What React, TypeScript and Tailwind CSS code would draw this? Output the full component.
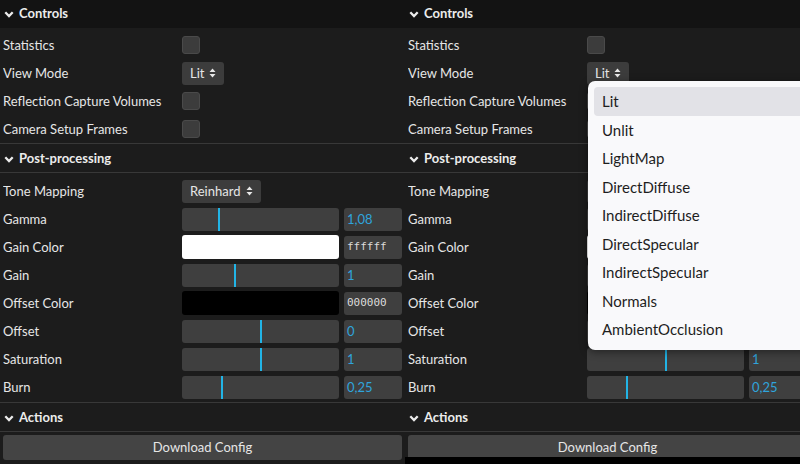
import { ReactNode } from "react";

const VIEW_MODES = [
  "Lit",
  "Unlit",
  "LightMap",
  "DirectDiffuse",
  "IndirectDiffuse",
  "DirectSpecular",
  "IndirectSpecular",
  "Normals",
  "AmbientOcclusion",
];

function Chevron() {
  return (
    <svg width="10" height="7" viewBox="0 0 10 7" className="shrink-0">
      <path d="M1.3 1.3l3.7 3.7 3.7-3.7" fill="none" stroke="#ececec" strokeWidth="2.3" />
    </svg>
  );
}

function SortArrows() {
  return (
    <svg width="7" height="10" viewBox="0 0 7 10" className="shrink-0">
      <path d="M3.5 0.5L6.5 4H0.5z M3.5 9.5L6.5 6H0.5z" fill="#e8e8e8" />
    </svg>
  );
}

function Header({ title, top }: { title: string; top?: boolean }) {
  return (
    <div
      className={`flex items-center gap-[5px] px-[4px] text-[13px] font-bold text-[#ececec] ${
        top ? "h-[28px] bg-[#131313]" : "h-[30px] border-y border-[#383838] bg-[#1c1c1c] pt-[2px]"
      }`}
    >
      <Chevron />
      <span>{title}</span>
    </div>
  );
}

function Row({ label, children }: { label: string; children: ReactNode }) {
  return (
    <div className="flex h-[28px] items-center">
      <div className="w-[179px] shrink-0 truncate pt-[1px]">{label}</div>
      <div className="flex items-center gap-[5px]">{children}</div>
    </div>
  );
}

function Checkbox() {
  return <div className="h-[18px] w-[18px] rounded-[3px] border border-[#4a4a4a] bg-[#3c3c3c]" />;
}

function Select({ value, w }: { value: string; w: string }) {
  return (
    <div className={`flex h-[23px] items-center justify-between rounded-[3px] bg-[#3c3c3c] px-[8px] ${w}`}>
      <span className="pt-[1px]">{value}</span>
      <SortArrows />
    </div>
  );
}

function Slider({ pos, value }: { pos: number; value: string }) {
  return (
    <>
      <div className="relative h-[23px] w-[157px] rounded-[3px] bg-[#3f3f3f]">
        <div className="absolute top-0 bottom-0 w-[2px] bg-[#22b4e6]" style={{ left: pos }} />
      </div>
      <div className="flex h-[23px] w-[58px] items-center rounded-[3px] bg-[#3f3f3f] pl-[3px] pt-[1px] text-[#2fa4dc]">
        {value}
      </div>
    </>
  );
}

function ColorRow({ color, hex }: { color: string; hex: string }) {
  return (
    <>
      <div className={`h-[24px] w-[157px] rounded-[3px] ${color}`} />
      <div className="flex h-[23px] w-[58px] items-center rounded-[3px] bg-[#3f3f3f] pl-[3px] font-['DejaVu_Sans_Mono',monospace] text-[11px] text-[#dcdcdc]">
        {hex}
      </div>
    </>
  );
}

function ViewModeMenu() {
  return (
    <div className="absolute left-[183px] top-[81px] w-[230px] rounded-[7px] bg-[#f9f9fb] p-[6px] shadow-[0_2px_8px_rgba(0,0,0,0.45)]">
      {VIEW_MODES.map((m, i) => (
        <div
          key={m}
          className={`flex h-[28.5px] items-center rounded-[4px] pl-[8px] text-[15px] text-[#1e1e1e] ${
            i === 0 ? "bg-[#e2e2e7]" : ""
          }`}
        >
          {m}
        </div>
      ))}
    </div>
  );
}

function Panel({ menuOpen }: { menuOpen?: boolean }) {
  return (
    <div className="relative h-[464px] w-[405px] bg-[#1c1c1c] text-[13px] text-[#e6e6e6]">
      <Header title="Controls" top />
      <div className="px-[3px] pt-[3px]">
        <Row label="Statistics">
          <Checkbox />
        </Row>
        <Row label="View Mode">
          <Select value="Lit" w="w-[42px]" />
        </Row>
        <Row label="Reflection Capture Volumes">
          <Checkbox />
        </Row>
        <Row label="Camera Setup Frames">
          <Checkbox />
        </Row>
      </div>
      <Header title="Post-processing" />
      <div className="px-[3px] pt-[4px] pb-[1px]">
        <Row label="Tone Mapping">
          <Select value="Reinhard" w="w-[79px]" />
        </Row>
        <Row label="Gamma">
          <Slider pos={36} value="1,08" />
        </Row>
        <Row label="Gain Color">
          <ColorRow color="bg-white" hex="ffffff" />
        </Row>
        <Row label="Gain">
          <Slider pos={52} value="1" />
        </Row>
        <Row label="Offset Color">
          <ColorRow color="bg-black" hex="000000" />
        </Row>
        <Row label="Offset">
          <Slider pos={78} value="0" />
        </Row>
        <Row label="Saturation">
          <Slider pos={78} value="1" />
        </Row>
        <Row label="Burn">
          <Slider pos={39} value="0,25" />
        </Row>
      </div>
      <Header title="Actions" />
      <div className="px-[3px] pt-[3px]">
        <button className="flex h-[25px] w-full items-center justify-center rounded-[3px] bg-[#444444] pt-[1px] text-[#e6e6e6]">
          Download Config
        </button>
      </div>
      {menuOpen && <ViewModeMenu />}
    </div>
  );
}

export default function App() {
  return (
    <div className="flex h-[464px] w-[800px] overflow-hidden bg-black font-['Lato',sans-serif]">
      <div className="h-[464px] shrink-0">
        <Panel />
      </div>
      <div className="h-[457px] shrink-0 overflow-hidden">
        <Panel menuOpen />
      </div>
    </div>
  );
}
